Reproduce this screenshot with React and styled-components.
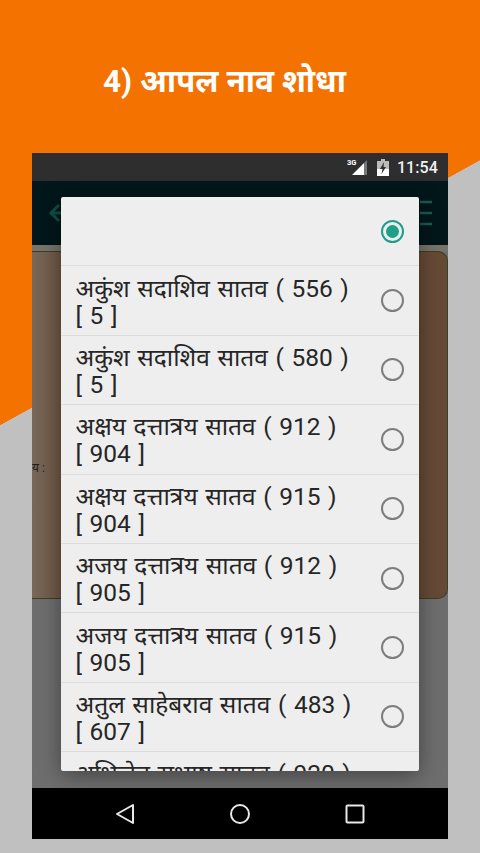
import styled, { createGlobalStyle } from "styled-components";

const names = [
  { name: "अकुंश सदाशिव सातव ( 556 )", code: "[ 5 ]" },
  { name: "अकुंश सदाशिव सातव ( 580 )", code: "[ 5 ]" },
  { name: "अक्षय दत्तात्रय सातव ( 912 )", code: "[ 904 ]" },
  { name: "अक्षय दत्तात्रय सातव ( 915 )", code: "[ 904 ]" },
  { name: "अजय दत्तात्रय सातव ( 912 )", code: "[ 905 ]" },
  { name: "अजय दत्तात्रय सातव ( 915 )", code: "[ 905 ]" },
  { name: "अतुल साहेबराव सातव ( 483 )", code: "[ 607 ]" },
  { name: "अभिजेत सुभाष सातव ( 920 )", code: "[ 607 ]" },
];

const App = () => {
  return (
    <Page>
      <GlobalStyle />
      <Title>4) आपल नाव शोधा</Title>
      <Phone>
        <StatusBar>
          <NetworkIcon />
          <BatteryIcon />
          <Clock>11:54</Clock>
        </StatusBar>
        <AppBar>
          <svg width="20" height="24" viewBox="0 0 20 24" fill="none" stroke="#0f4f42" strokeWidth="3">
            <path d="M20 12H3M11 4l-8 8 8 8" />
          </svg>
          <svg width="12" height="26" viewBox="0 0 12 26" fill="none" stroke="#1c5a50" strokeWidth="2.4">
            <path d="M0 2h12M0 13h12M0 24h12" />
          </svg>
        </AppBar>
        <Content>
          <Card>
            <CardLabel>य :</CardLabel>
          </Card>
        </Content>
        <NavBar>
          <svg width="20" height="22" viewBox="0 0 20 22" fill="none" stroke="#e8e8e8" strokeWidth="2">
            <path d="M18 2v18L2 11z" strokeLinejoin="round" />
          </svg>
          <svg width="20" height="20" viewBox="0 0 20 20" fill="none" stroke="#e8e8e8" strokeWidth="2">
            <circle cx="10" cy="10" r="9" />
          </svg>
          <svg width="20" height="20" viewBox="0 0 20 20" fill="none" stroke="#e8e8e8" strokeWidth="2">
            <rect x="1.5" y="1.5" width="17" height="17" rx="1" />
          </svg>
        </NavBar>
        <Dialog>
          <Row>
            <RowText />
            <Radio $checked />
          </Row>
          {names.map((item) => (
            <Row key={item.name + item.code}>
              <RowText>
                {item.name}
                <br />
                {item.code}
              </RowText>
              <Radio />
            </Row>
          ))}
        </Dialog>
      </Phone>
    </Page>
  );
};

const NetworkIcon = () => (
  <svg width="21" height="18" viewBox="0 0 21 18">
    <text x="0" y="7" fontSize="7.5" fontWeight="700" fill="#fff" fontFamily="Roboto, sans-serif">3G</text>
    <path d="M5 17L17 5v12z" fill="#fff" />
    <path d="M17 5l3-3v15h-3z" fill="#777" />
  </svg>
);

const BatteryIcon = () => (
  <svg width="12" height="17" viewBox="0 0 12 17">
    <path d="M4 0h4v2h4v15H0V2h4z" fill="#bbb" />
    <path d="M0 10h12v7H0z" fill="#fff" />
    <path d="M7 3L3 10h2.500L4.500 15 9 8H6.500z" fill="#2e2e2e" />
  </svg>
);

const GlobalStyle = createGlobalStyle`
  html, body {
    margin: 0;
    padding: 0;
  }
  body {
    font-family: Roboto, "Noto Sans", "Noto Sans Devanagari", sans-serif;
  }
`;

const Page = styled.div`
  width: 480px;
  height: 853px;
  overflow: hidden;
  padding: 62px 32px 0;
  box-sizing: border-box;
  background:
    linear-gradient(#f47200, #f47200) 0 0 / 100% 160px no-repeat,
    linear-gradient(to bottom right, #f47200 50%, #c0c0c0 50.1%) 0 160px / 100% 265px no-repeat,
    #c0c0c0;
`;

const Title = styled.h1`
  margin: 0 0 52px;
  padding-right: 31px;
  height: 39px;
  line-height: 39px;
  font-size: 31.5px;
  font-weight: 700;
  text-align: center;
  color: #fff;
`;

const Phone = styled.div`
  position: relative;
  width: 416px;
  height: 686px;
  display: flex;
  flex-direction: column;
  overflow: hidden;
  background: #6b6b6b;
`;

const StatusBar = styled.div`
  height: 28px;
  display: flex;
  align-items: center;
  justify-content: flex-end;
  gap: 9px;
  padding-right: 10px;
  background: #2e2e2e;
`;

const Clock = styled.span`
  margin-left: -1px;
  font-size: 16px;
  font-weight: 500;
  letter-spacing: 0.1px;
  color: #f2f2f2;
`;

const AppBar = styled.div`
  height: 64px;
  display: flex;
  align-items: center;
  justify-content: space-between;
  padding: 0 16px;
  background: #02171a;
`;

const Content = styled.div`
  flex: 1;
  border-top: 6px solid #78746c;
  background: #6e6e6e;
`;

const Card = styled.div`
  height: 346px;
  display: flex;
  align-items: center;
  border: 1px solid #3a3f25;
  border-left: none;
  border-radius: 0 10px 10px 0;
  background: linear-gradient(90deg, #77685a, #6a4f3a 10%, #654a36);
`;

const CardLabel = styled.span`
  margin-top: 84px;
  font-size: 12px;
  color: #1d1d1d;
`;

const NavBar = styled.div`
  height: 51px;
  display: flex;
  align-items: center;
  justify-content: space-between;
  padding: 0 83px;
  background: #000;
`;

const Dialog = styled.div`
  position: absolute;
  top: 44px;
  left: 29px;
  width: 358px;
  height: 574px;
  box-sizing: border-box;
  overflow: hidden;
  border-radius: 2px;
  background: #eeeeee;
  box-shadow: 0 4px 22px rgba(0, 0, 0, 0.4);
`;

const Row = styled.div`
  height: 69.4px;
  box-sizing: border-box;
  display: flex;
  align-items: center;
  justify-content: space-between;
  padding: 0 15px 0 14.5px;
  border-bottom: 1px solid #dcdcdc;
`;

const RowText = styled.div`
  width: 290px;
  padding-top: 2px;
  font-size: 24.5px;
  word-spacing: 1.5px;
  line-height: 27px;
  white-space: nowrap;
  color: #262626;
`;

const Radio = styled.span`
  flex: none;
  position: relative;
  width: 23px;
  height: 23px;
  box-sizing: border-box;
  border-radius: 50%;
  border: 2px solid ${(props) => (props.$checked ? "#1f9f88" : "#7d7d7d")};

  &::after {
    content: "";
    display: ${(props) => (props.$checked ? "block" : "none")};
    position: absolute;
    inset: 3px;
    border-radius: 50%;
    background: #1f9f88;
  }
`;

export default App;
